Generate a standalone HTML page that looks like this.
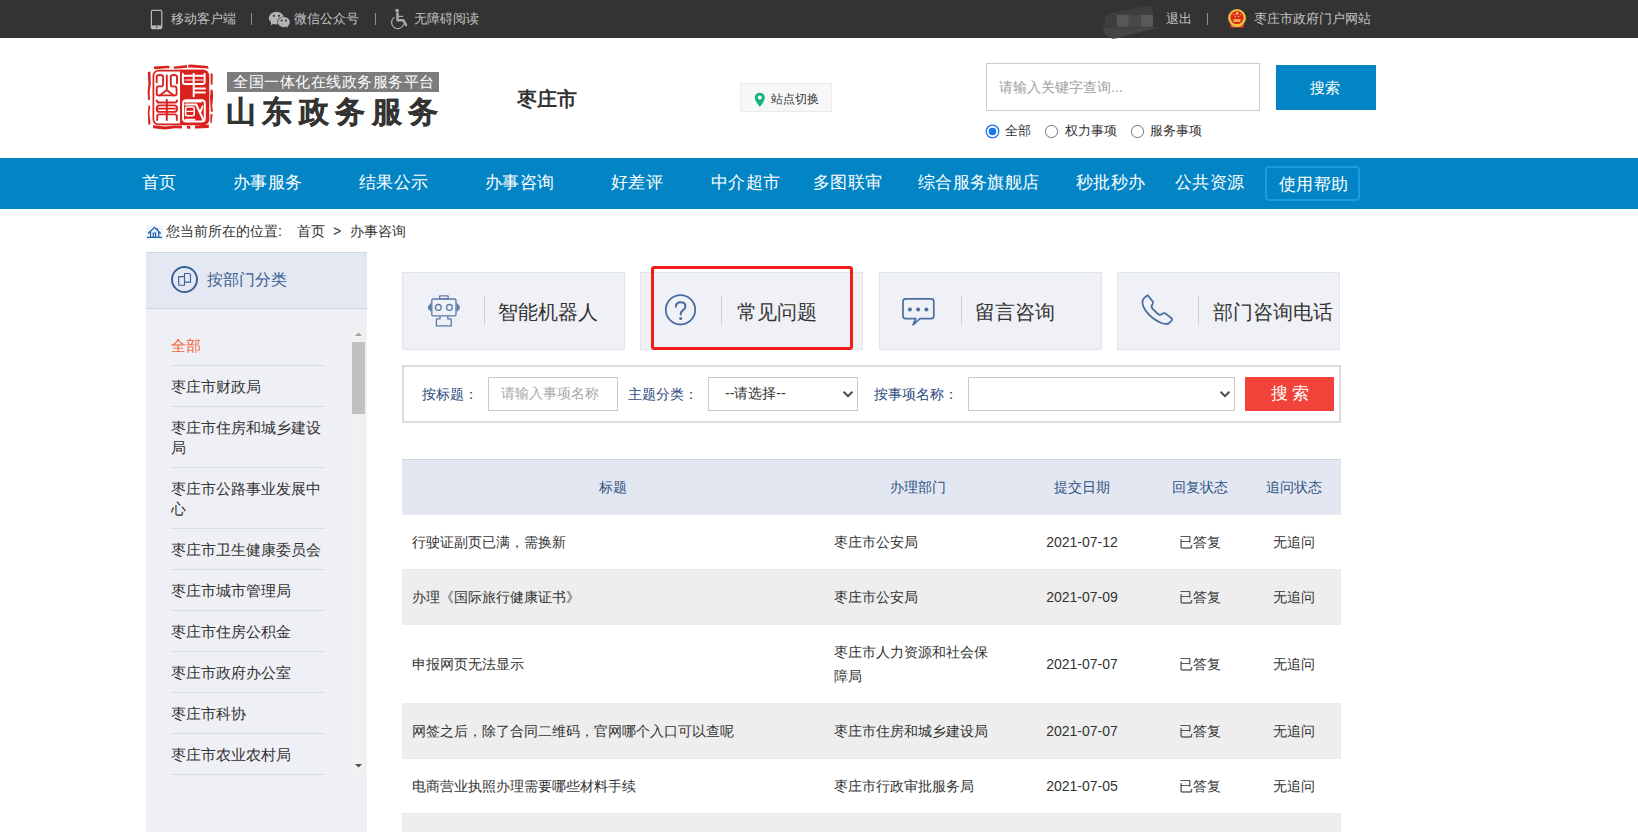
<!DOCTYPE html>
<html><head><meta charset="utf-8">
<style>
*{margin:0;padding:0;box-sizing:border-box}
html,body{width:1638px;height:832px;overflow:hidden;background:#fff}
body{position:relative;font-family:"Liberation Sans",sans-serif;color:#333}
.a{position:absolute;white-space:nowrap}
#top{position:absolute;left:0;top:0;width:1638px;height:38px;background:#333}
#top .t{position:absolute;top:10px;font-size:13px;line-height:17px;color:#c4c4c4}
#top .sep{position:absolute;top:13px;width:1px;height:12px;background:#8c8c8c}
#nav{position:absolute;left:0;top:158px;width:1638px;height:51px;background:#0385c5}
#nav .n{position:absolute;top:13px;font-size:17px;letter-spacing:0.35px;line-height:24px;color:#fff}
#help{position:absolute;left:1265px;top:8px;width:95px;height:35px;border:2px solid #1a9ce0;border-radius:4px}
#side{position:absolute;left:146px;top:252px;width:221px;height:580px;background:#eff0f5}
#sidehd{position:absolute;left:0;top:0;width:221px;height:57px;background:#e3e8f2;border-top:1px solid #cdd6e6;border-bottom:1px solid #cdd6e6}
#list{position:absolute;left:25px;top:73px;width:154px;height:450px;overflow:hidden}
#list div{font-size:15px;line-height:20px;padding:11px 0 9px;border-bottom:1px solid #d9dde8;color:#333;white-space:normal}
.card{position:absolute;top:272px;width:223px;height:78px;background:#eff1f6;border:1px solid #dfe4ef}
.card .dv{position:absolute;top:23px;width:1px;height:29px;background:#c9ced8}
.card .ct{position:absolute;top:26px;font-size:20px;line-height:26px;color:#333}
#form{position:absolute;left:402px;top:365px;width:939px;height:58px;border:2px solid #dcdcdc;background:#fff}
.lbl{position:absolute;font-size:14px;line-height:18px;color:#2b4a7c}
.inp{position:absolute;border:1px solid #c8c8c8;background:#fff}
table{position:absolute;left:402px;top:459px;width:939px;border-collapse:collapse;font-size:14px}
th{font-weight:normal;color:#2f5283;background:#e3e7f1;height:55px;border-top:1px solid #cdd4e2;border-bottom:1px solid #eaeaea;text-align:center;padding:2px 0 0}
td{padding:15px 10px;line-height:24px;border-bottom:1px solid #ebebeb;color:#333;vertical-align:middle}
tr.g td{background:#eeeeee}
td.c{text-align:center}
</style></head><body>

<div id="top">
  <!-- phone icon -->
  <svg class="a" style="left:150px;top:9px" width="13" height="21" viewBox="0 0 13 21"><rect x="1.4" y="1.4" width="10.4" height="18.2" rx="1.3" fill="none" stroke="#b8b8b8" stroke-width="1.2"/><rect x="1.4" y="16.4" width="10.4" height="3.2" fill="#b8b8b8"/><circle cx="6.6" cy="18" r="0.8" fill="#333"/></svg>
  <div class="t" style="left:171px">移动客户端</div>
  <div class="sep" style="left:251px"></div>
  <svg class="a" style="left:264px;top:6px" width="30" height="26" viewBox="0 0 30 26">
    <ellipse cx="12.4" cy="12.1" rx="7.6" ry="6.3" fill="#b4b4b4"/>
    <path d="M7,16 L6.8,19.2 L10,17.5Z" fill="#b4b4b4"/>
    <ellipse cx="19.9" cy="16.1" rx="6.6" ry="5.6" fill="#333"/>
    <ellipse cx="19.9" cy="16.1" rx="6" ry="5.1" fill="#b4b4b4"/>
    <path d="M22,20 L24,22 L23.6,19.5Z" fill="#b4b4b4"/>
    <circle cx="9.9" cy="9.8" r="1.1" fill="#333"/><circle cx="15" cy="9.8" r="1.1" fill="#333"/>
    <circle cx="17.7" cy="14.5" r="1" fill="#333"/><circle cx="21.9" cy="14.5" r="1" fill="#333"/>
  </svg>
  <div class="t" style="left:294px">微信公众号</div>
  <div class="sep" style="left:375px"></div>
  <svg class="a" style="left:386px;top:4px" width="26" height="28" viewBox="0 0 26 28">
    <circle cx="11.1" cy="6.6" r="1.9" fill="#a8a8a8"/>
    <path d="M11.5,9.5 V16.2 H17.2 L20,21" fill="none" stroke="#a8a8a8" stroke-width="2.6" stroke-linecap="round" stroke-linejoin="round"/>
    <path d="M12.5,12.4 H16.6" stroke="#a8a8a8" stroke-width="1.3" stroke-linecap="round"/>
    <path d="M8.4,13.2 A6.2,6.2 0 1 0 17.6,20.4" fill="none" stroke="#a8a8a8" stroke-width="1.3"/>
  </svg>
  <div class="t" style="left:414px">无障碍阅读</div>

  <svg class="a" style="left:1095px;top:0px" width="70" height="40" viewBox="0 0 70 40">
    <path d="M10.1,18.7 Q11,13 21.7,11.9 Q40,7 57.5,6 L58,26.8 L10.1,26.8Z" fill="#3e3e3e"/>
    <rect x="10.1" y="14.9" width="11.6" height="11.9" fill="#3c3e40"/>
    <rect x="21.7" y="14.9" width="12.1" height="11.9" fill="#575757"/>
    <rect x="33.8" y="14.9" width="12.1" height="11.9" fill="#46484a"/>
    <rect x="45.9" y="14.9" width="12.1" height="11.9" fill="#5a5858"/>
    <path d="M7.8,27.3 L65.6,27.3 Q50,31 30,36 Q20,39.5 16.7,38.5 Q8,35 7.8,27.3Z" fill="#454545"/>
  </svg>
  <div class="t" style="left:1166px">退出</div>
  <div class="sep" style="left:1207px"></div>
  <svg class="a" style="left:1222px;top:4px" width="30" height="28" viewBox="0 0 30 28">
    <path d="M8.2,18.5 L8.2,23.6 L21.8,23.6 L21.8,18.5Z" fill="#e0301e"/>
    <circle cx="15" cy="14" r="8.9" fill="#efbf44"/>
    <circle cx="15" cy="13.6" r="6.6" fill="#dd2a1f"/>
    <circle cx="15" cy="9.4" r="1.3" fill="#f3cc55"/>
    <circle cx="11.6" cy="10.6" r="0.7" fill="#f3cc55"/><circle cx="18.4" cy="10.6" r="0.7" fill="#f3cc55"/>
    <circle cx="13.4" cy="12.5" r="0.7" fill="#f3cc55"/><circle cx="16.6" cy="12.5" r="0.7" fill="#f3cc55"/>
    <rect x="11.5" y="15.2" width="7" height="2.6" fill="#efbf44"/>
    <path d="M9,19.5 Q15,22 21,19.5" fill="none" stroke="#efbf44" stroke-width="1.2"/>
    <path d="M10,22.2 H20" stroke="#efbf44" stroke-width="0.9"/>
  </svg>
  <div class="t" style="left:1254px">枣庄市政府门户网站</div>
</div>

<!-- Logo -->
<svg class="a" style="left:145px;top:62px" width="72" height="70" viewBox="0 0 72 70">
  <g fill="#d9211d">
    <path d="M2.8,10 L5.4,9.4 L5.8,22 L4.6,30 L5.2,44 L4.4,52 L5.6,62 L3.4,63 L2.8,52 L3.4,44 L2.6,30 L3.4,22Z"/>
    <path d="M65.6,11 L67.8,12 L67.4,26 L68.2,34 L67.2,44 L68,50 L66.4,62 L65.2,60 L65.8,48 L65,36 L65.8,24Z"/>
    <path d="M9,4.6 L22,3.8 L30,4.4 L46,2.6 L63,4 L63.6,6.6 L46,5.6 L30,6.8 L22,6.2 L9,7.2Z"/>
    <path d="M8,63.2 L20,64.6 L30,63.6 L45,64 L64,62.4 L63.6,66 L45,66.8 L30,66.2 L20,67.4 L8,66.2Z"/>
  </g>
  <g fill="#fff">
    <rect x="24.4" y="1" width="4.5" height="8"/><rect x="42" y="1" width="1.2" height="7"/>
    <rect x="37" y="61" width="5" height="8"/><rect x="45.4" y="61" width="4.6" height="8"/>
    <rect x="0" y="38" width="7" height="5.6"/><rect x="64" y="22.7" width="8" height="5"/><rect x="64" y="49.6" width="8" height="2.6"/>
  </g>
  <rect x="8.4" y="8.6" width="55" height="53.8" rx="5" fill="#fff" stroke="#d9211d" stroke-width="1.7"/>
  <path d="M35,7.8 H58.4 A5,5 0 0 1 63.4,12.8 V57.4 A5,5 0 0 1 58.4,62.4 H35Z" fill="#d9211d"/>
  <g fill="none" stroke="#d9211d" stroke-width="1.9" stroke-linecap="round" stroke-linejoin="round">
    <path d="M11.7,20.3 V14.6 Q11.7,13 14.8,13 Q18.1,13 18.1,14.6 V21.2 Q18.1,24.4 16.9,24.4 H13.2 Q11.7,24.4 11.7,26.9 V31.8 Q11.7,33.4 14,33.4 H29.5 Q31.6,33.4 31.6,31.8 V26.9 Q31.6,24.4 29.5,24.4 H26.7 Q25.8,24.4 25.8,21.2 V14.6 Q25.8,13 28.7,13 Q32,13 32,14.6 V21.2"/>
    <path d="M21.8,13.4 V28.1 L14.8,33.4 M21.8,28.1 L28.7,33.4"/>
    <path d="M11.7,38.5 Q12,40.5 14,40.5 H29.9 Q32,40.5 32,38.5"/>
    <path d="M14.5,43.4 H29.2 Q32,43.4 32,46.65 Q32,49.9 29.2,49.9 H14.5 Q11.7,49.9 11.7,46.65 Q11.7,43.4 14.5,43.4Z M13.5,46.6 H30"/>
    <path d="M12.2,58.1 V54 Q12.2,52.4 14.4,52.4 H29.5 Q31.8,52.4 31.8,54 V58.1"/>
    <path d="M21.8,37.7 V58.1"/>
  </g>
  <g fill="none" stroke="#fff" stroke-width="2" stroke-linecap="round" stroke-linejoin="round">
    <path d="M37.9,11.8 V20 Q37.9,22 39.9,22 H57.6 Q59.6,22 59.6,20 V11.8 M37.9,13.8 H59.6 M48.7,11.8 V34.2 M49.3,26.5 H60 M49.3,30.6 H60"/>
    <path d="M40,18 H57.5" stroke-width="1"/>
    <rect x="38.1" y="38.3" width="21.7" height="21.3" rx="3"/>
    <path d="M40.5,39.5 H56 M40.5,42.6 H49.5 M41,57.7 H49.5 M51,42.2 L58.3,57.7 M55,51 L57.5,44.5"/>
    <rect x="40.6" y="45" width="8.6" height="8.8" rx="1.5" stroke-width="1.6"/>
    <path d="M42,49.4 H48" stroke-width="1.3"/>
  </g>
</svg>
<div class="a" style="left:227px;top:72px;width:212px;height:20px;background:#7c7c7c"></div>
<div class="a" style="left:233px;top:72px;font-size:15px;line-height:20px;color:#fff;letter-spacing:0.5px">全国一体化在线政务服务平台</div>
<div class="a" style="left:226px;top:94px;font-size:30px;line-height:36px;font-weight:bold;color:#333;letter-spacing:6.4px;-webkit-text-stroke:0.3px #333">山东政务服务</div>
<div class="a" style="left:517px;top:86px;font-size:20px;line-height:26px;font-weight:bold;color:#333">枣庄市</div>
<div class="a" style="left:740px;top:83px;width:92px;height:29px;background:#f7f7f7;border:1px solid #ebebeb"></div>
<svg class="a" style="left:753px;top:92px" width="13" height="16" viewBox="0 0 13 16"><path d="M6.8,0.8 C3.9,0.8 1.8,3 1.8,5.8 C1.8,9.2 6.8,14.8 6.8,14.8 C6.8,14.8 11.8,9.2 11.8,5.8 C11.8,3 9.7,0.8 6.8,0.8Z M6.8,3.6 A2,2 0 1 1 6.79,3.6Z" fill="#15b47c" fill-rule="evenodd"/></svg>
<div class="a" style="left:771px;top:91px;font-size:12px;line-height:17px;color:#333">站点切换</div>

<div class="a" style="left:986px;top:63px;width:274px;height:48px;border:1px solid #cccccc"></div>
<div class="a" style="left:999px;top:78px;font-size:14px;line-height:19px;color:#a0a0a0">请输入关键字查询...</div>
<div class="a" style="left:1276px;top:65px;width:100px;height:45px;background:#0385c5"></div>
<div class="a" style="left:1310px;top:78px;font-size:15px;line-height:20px;color:#fff">搜索</div>
<svg class="a" style="left:985px;top:124px" width="15" height="15" viewBox="0 0 15 15"><circle cx="7.5" cy="7.5" r="6.3" fill="#fff" stroke="#1a73e8" stroke-width="1.3"/><circle cx="7.5" cy="7.5" r="3.8" fill="#1a73e8"/></svg>
<div class="a" style="left:1005px;top:122px;font-size:13px;line-height:18px;color:#333">全部</div>
<svg class="a" style="left:1044px;top:124px" width="15" height="15" viewBox="0 0 15 15"><circle cx="7.5" cy="7.5" r="6.1" fill="#fff" stroke="#767676" stroke-width="1"/></svg>
<div class="a" style="left:1065px;top:122px;font-size:13px;line-height:18px;color:#333">权力事项</div>
<svg class="a" style="left:1130px;top:124px" width="15" height="15" viewBox="0 0 15 15"><circle cx="7.5" cy="7.5" r="6.1" fill="#fff" stroke="#767676" stroke-width="1"/></svg>
<div class="a" style="left:1150px;top:122px;font-size:13px;line-height:18px;color:#333">服务事项</div>

<div id="nav">
  <div class="n" style="left:142px">首页</div>
  <div class="n" style="left:233px">办事服务</div>
  <div class="n" style="left:359px">结果公示</div>
  <div class="n" style="left:485px">办事咨询</div>
  <div class="n" style="left:611px">好差评</div>
  <div class="n" style="left:711px">中介超市</div>
  <div class="n" style="left:813px">多图联审</div>
  <div class="n" style="left:918px">综合服务旗舰店</div>
  <div class="n" style="left:1076px">秒批秒办</div>
  <div class="n" style="left:1175px">公共资源</div>
  <div id="help"></div>
  <div class="n" style="left:1279px;top:15px">使用帮助</div>
</div>

<!-- breadcrumb -->
<svg class="a" style="left:145px;top:222px" width="20" height="20" viewBox="0 0 20 20">
  <rect x="1" y="3.6" width="17" height="13" fill="#eef6fb"/>
  <path d="M3.1,11.5 L9.5,5.3 L15.7,11.5 M12.5,8.4 V6.2 M5.5,9.6 V14.9 M13.7,9.6 V14.9 M8.3,14.9 V11 H10.6 V14.9 M1.9,15.4 H17.1" fill="none" stroke="#1e5fa8" stroke-width="1.2"/>
</svg>
<div class="a" style="left:166px;top:222px;font-size:14px;line-height:19px;color:#333">您当前所在的位置:</div>
<div class="a" style="left:297px;top:222px;font-size:14px;line-height:19px;color:#333">首页</div>
<div class="a" style="left:333px;top:222px;font-size:14px;line-height:19px;color:#333">&gt;</div>
<div class="a" style="left:350px;top:222px;font-size:14px;line-height:19px;color:#333">办事咨询</div>

<!-- sidebar -->
<div id="side">
  <div id="sidehd">
    <svg class="a" style="left:24px;top:13px" width="29" height="29" viewBox="0 0 29 29">
      <circle cx="14.5" cy="13.5" r="12.5" fill="none" stroke="#3a6399" stroke-width="2"/>
      <path d="M8.7,10.6 H14.5 V19.2 H8.7Z M14.5,10.6 V7.5 H19.3 L20.5,8.7 V16.1 H14.5" fill="none" stroke="#3a6399" stroke-width="1.1"/>
    </svg>
    <div class="a" style="left:61px;top:16px;font-size:16px;line-height:22px;color:#3b5d91">按部门分类</div>
  </div>
  <div id="list">
    <div style="color:#f2633a">全部</div>
    <div>枣庄市财政局</div>
    <div>枣庄市住房和城乡建设局</div>
    <div>枣庄市公路事业发展中心</div>
    <div>枣庄市卫生健康委员会</div>
    <div>枣庄市城市管理局</div>
    <div>枣庄市住房公积金</div>
    <div>枣庄市政府办公室</div>
    <div>枣庄市科协</div>
    <div>枣庄市农业农村局</div>
    <div>枣庄市教育局</div>
  </div>
  <div class="a" style="left:204px;top:73px;width:17px;height:450px;background:#f1f1f1"></div>
  <svg class="a" style="left:204px;top:73px" width="17" height="450" viewBox="0 0 17 450">
    <path d="M8.5,7.5 L12,11 L5,11Z" fill="#a3a3a3"/>
    <rect x="2" y="17" width="13" height="72" fill="#c1c1c1"/>
    <path d="M5,439 L12,439 L8.5,442.5Z" fill="#505050"/>
  </svg>
</div>

<!-- cards -->
<div class="card" style="left:402px">
  <svg class="a" style="left:19px;top:16px" width="44" height="44" viewBox="0 0.6 44 44" fill="none" stroke="#5a79a6" stroke-width="1.3">
    <rect x="17.6" y="7.4" width="8.6" height="3" rx="0.6"/>
    <rect x="9.8" y="10.6" width="24.2" height="16.8" rx="1.4"/>
    <circle cx="16.3" cy="19" r="2.9"/><circle cx="27.4" cy="19" r="2.9"/>
    <path d="M7.6,15.2 H9.2 V22.8 H7.6Z M6.1,17.2 H7.6 V21 H6.1Z M34.6,15.2 H36.2 V22.8 H34.6Z M36.2,17.2 H37.7 V21 H36.2Z" fill="#5a79a6" stroke="none"/>
    <path d="M18,27.8 V30.4 H15.2 A0.8,0.8 0 0 0 14.4,31.2 V37.4 H29.2 V31.2 A0.8,0.8 0 0 0 28.4,30.4 H25.8 V27.8"/>
  </svg>
  <div class="dv" style="left:81px"></div>
  <div class="ct" style="left:95px">智能机器人</div>
</div>
<div class="card" style="left:640px">
  <svg class="a" style="left:23px;top:20px" width="34" height="34" viewBox="0 0 34 34">
    <circle cx="16.5" cy="16.8" r="14.7" fill="none" stroke="#4a6fa0" stroke-width="1.8"/>
    <path d="M11.9,13.8 Q11.9,9.3 16.6,9.3 Q21.4,9.3 21.4,13.2 Q21.4,15.6 18.8,17.4 Q16.7,18.9 16.7,21.5" fill="none" stroke="#4a6fa0" stroke-width="2" stroke-linecap="round"/>
    <circle cx="16.7" cy="25.4" r="1.5" fill="#4a6fa0"/>
  </svg>
  <div class="dv" style="left:80px"></div>
  <div class="ct" style="left:96px">常见问题</div>
</div>
<div class="card" style="left:879px">
  <svg class="a" style="left:15px;top:15px" width="50" height="50" viewBox="0 0 50 50">
    <path d="M10.6,10.8 H36.2 A2.6,2.6 0 0 1 38.8,13.4 V28 A2.6,2.6 0 0 1 36.2,30.6 H25 L18,36.8 L20.8,30.6 H10.6 A2.6,2.6 0 0 1 8,28 V13.4 A2.6,2.6 0 0 1 10.6,10.8Z" fill="none" stroke="#4a6fa0" stroke-width="1.7" stroke-linejoin="round"/>
    <circle cx="14.9" cy="21.5" r="2" fill="#4a6fa0"/><circle cx="23.1" cy="21.5" r="2" fill="#4a6fa0"/><circle cx="31.4" cy="21.5" r="2" fill="#4a6fa0"/>
  </svg>
  <div class="dv" style="left:81px"></div>
  <div class="ct" style="left:95px">留言咨询</div>
</div>
<div class="card" style="left:1117px">
  <svg class="a" style="left:12px;top:12px" width="50" height="50" viewBox="0 0 50 50">
    <path d="M17.7,10.2 L22.8,16.6 Q23.6,17.8 22.4,19.3 Q20.6,21.4 22.6,23.8 L28,29 Q29.8,30.4 31.6,29.2 Q33.8,27.6 35.6,28.6 L41.6,33.2 Q42.6,34.4 41.4,35.8 L38.8,38.4 Q36.4,39.8 31.4,38 Q22.6,34.4 16.4,26.6 Q11.6,20.2 12.6,16 Q13.4,12.8 17.7,10.2Z" fill="none" stroke="#4a6fa0" stroke-width="1.8" stroke-linejoin="round"/>
  </svg>
  <div class="dv" style="left:80px"></div>
  <div class="ct" style="left:95px">部门咨询电话</div>
</div>
<div class="a" style="left:651px;top:266px;width:202px;height:84px;border:3px solid #f01b1b;border-radius:3px"></div>

<!-- form -->
<div id="form"></div>
<div class="lbl" style="left:422px;top:385px">按标题：</div>
<div class="inp" style="left:488px;top:377px;width:130px;height:34px"></div>
<div class="a" style="left:501px;top:384px;font-size:14px;line-height:19px;color:#a9a9a9">请输入事项名称</div>
<div class="lbl" style="left:628px;top:385px">主题分类：</div>
<div class="inp" style="left:708px;top:377px;width:150px;height:34px"></div>
<div class="a" style="left:725px;top:384px;font-size:14px;line-height:19px;color:#333">--请选择--</div>
<svg class="a" style="left:842px;top:390px" width="12" height="9" viewBox="0 0 12 9"><path d="M1.6,1.8 L6,6.2 L10.4,1.8" fill="none" stroke="#4a4a4a" stroke-width="2"/></svg>
<div class="lbl" style="left:874px;top:385px">按事项名称：</div>
<div class="inp" style="left:968px;top:377px;width:267px;height:34px"></div>
<svg class="a" style="left:1219px;top:390px" width="12" height="9" viewBox="0 0 12 9"><path d="M1.6,1.8 L6,6.2 L10.4,1.8" fill="none" stroke="#4a4a4a" stroke-width="2"/></svg>
<div class="a" style="left:1245px;top:377px;width:89px;height:34px;background:#f2433a"></div>
<div class="a" style="left:1271px;top:382px;font-size:17px;line-height:24px;color:#fff;letter-spacing:4px">搜索</div>

<!-- table -->
<table>
<colgroup><col style="width:422px"><col style="width:188px"><col style="width:140px"><col style="width:95px"><col style="width:94px"></colgroup>
<tr><th>标题</th><th>办理部门</th><th>提交日期</th><th>回复状态</th><th>追问状态</th></tr>
<tr><td>行驶证副页已满，需换新</td><td>枣庄市公安局</td><td class="c">2021-07-12</td><td class="c">已答复</td><td class="c">无追问</td></tr>
<tr class="g"><td>办理《国际旅行健康证书》</td><td>枣庄市公安局</td><td class="c">2021-07-09</td><td class="c">已答复</td><td class="c">无追问</td></tr>
<tr><td>申报网页无法显示</td><td>枣庄市人力资源和社会保<br>障局</td><td class="c">2021-07-07</td><td class="c">已答复</td><td class="c">无追问</td></tr>
<tr class="g"><td>网签之后，除了合同二维码，官网哪个入口可以查呢</td><td>枣庄市住房和城乡建设局</td><td class="c">2021-07-07</td><td class="c">已答复</td><td class="c">无追问</td></tr>
<tr><td>电商营业执照办理需要哪些材料手续</td><td>枣庄市行政审批服务局</td><td class="c">2021-07-05</td><td class="c">已答复</td><td class="c">无追问</td></tr>
<tr class="g"><td>关于办理营业执照的问题</td><td>枣庄市行政审批服务局</td><td class="c">2021-07-05</td><td class="c">已答复</td><td class="c">无追问</td></tr>
</table>

</body></html>
